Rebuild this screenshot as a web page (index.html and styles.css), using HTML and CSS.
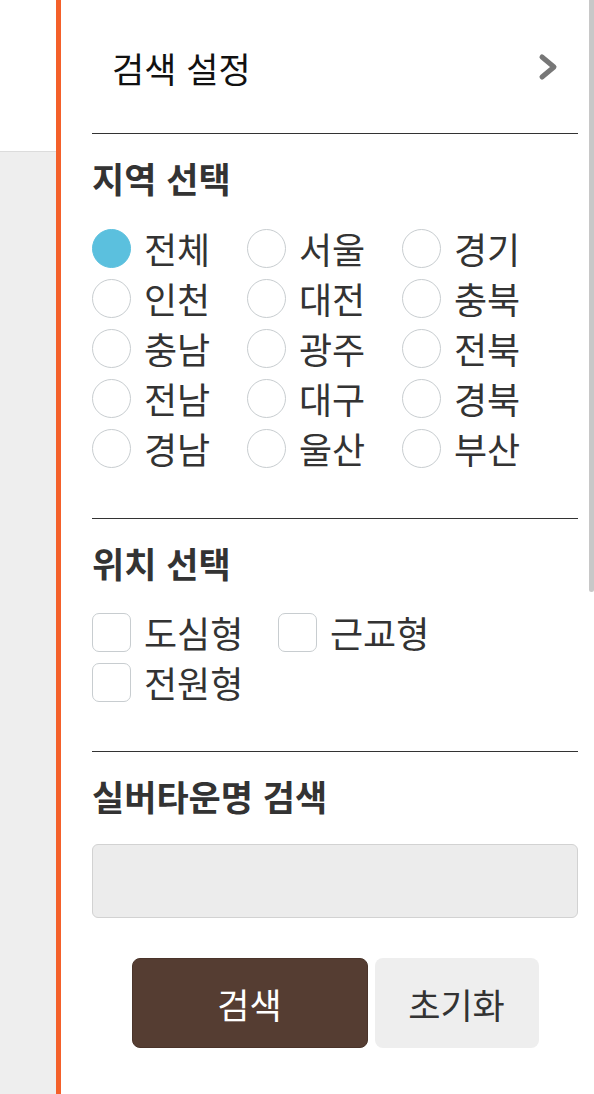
FILE: index.html
```html
<!DOCTYPE html>
<html lang="ko">
<head>
<meta charset="utf-8">
<title>검색 설정</title>
<link rel="stylesheet" href="styles.css">
</head>
<body>
<div class="backdrop">
  <div class="backdrop-top"></div>
  <div class="backdrop-bottom"></div>
</div>
<div class="accent"></div>
<aside class="panel">
  <header class="panel-header">
    <span class="panel-title">검색 설정</span>
    <svg class="chevron" width="20" height="28" viewBox="0 0 20 28"><polyline points="4,4 16,14 4,24" fill="none" stroke="#777" stroke-width="5" stroke-linecap="round" stroke-linejoin="round"/></svg>
  </header>

  <section class="section section-region">
    <h2 class="section-title">지역 선택</h2>
    <div class="radio-grid">
      <label class="opt"><span class="radio checked"></span><span class="opt-label">전체</span></label>
      <label class="opt"><span class="radio"></span><span class="opt-label">서울</span></label>
      <label class="opt"><span class="radio"></span><span class="opt-label">경기</span></label>
      <label class="opt"><span class="radio"></span><span class="opt-label">인천</span></label>
      <label class="opt"><span class="radio"></span><span class="opt-label">대전</span></label>
      <label class="opt"><span class="radio"></span><span class="opt-label">충북</span></label>
      <label class="opt"><span class="radio"></span><span class="opt-label">충남</span></label>
      <label class="opt"><span class="radio"></span><span class="opt-label">광주</span></label>
      <label class="opt"><span class="radio"></span><span class="opt-label">전북</span></label>
      <label class="opt"><span class="radio"></span><span class="opt-label">전남</span></label>
      <label class="opt"><span class="radio"></span><span class="opt-label">대구</span></label>
      <label class="opt"><span class="radio"></span><span class="opt-label">경북</span></label>
      <label class="opt"><span class="radio"></span><span class="opt-label">경남</span></label>
      <label class="opt"><span class="radio"></span><span class="opt-label">울산</span></label>
      <label class="opt"><span class="radio"></span><span class="opt-label">부산</span></label>
    </div>
  </section>

  <section class="section section-location">
    <h2 class="section-title">위치 선택</h2>
    <div class="check-list">
      <label class="opt check-item"><span class="checkbox"></span><span class="opt-label">도심형</span></label>
      <label class="opt check-item"><span class="checkbox"></span><span class="opt-label">근교형</span></label>
      <label class="opt check-item"><span class="checkbox"></span><span class="opt-label">전원형</span></label>
    </div>
  </section>

  <section class="section section-name">
    <h2 class="section-title">실버타운명 검색</h2>
    <div class="name-input"></div>
    <div class="actions">
      <button class="btn btn-search">검색</button>
      <button class="btn btn-reset">초기화</button>
    </div>
  </section>

  <div class="scrollbar"></div>
</aside>
</body>
</html>
```

FILE: styles.css
```css
html, body {
  margin: 0;
  padding: 0;
}
body {
  display: flex;
  width: 594px;
  height: 1094px;
  overflow: hidden;
  font-family: "Noto Sans CJK KR", "Noto Sans", sans-serif;
  color: #333;
  background: #fff;
}
.backdrop {
  width: 56px;
  display: flex;
  flex-direction: column;
}
.backdrop-top {
  height: 151px;
  background: #fff;
  border-bottom: 1px solid #dcdcdc;
}
.backdrop-bottom {
  flex: 1;
  background: #eeeeee;
}
.accent {
  width: 5px;
  background: #f4602a;
}
.panel {
  flex: 1;
  position: relative;
  background: #fff;
  padding: 0 16px 0 31px;
}
.panel-header {
  height: 133px;
  display: flex;
  align-items: center;
  justify-content: space-between;
  padding: 0 20px 0 20px;
  border-bottom: 1px solid #333;
}
.panel-title {
  font-size: 35px;
  color: #111;
  line-height: 40px;
  margin-top: 3px;
}
.chevron {
  display: block;
}
.section {
  padding-top: 24px;
  border-bottom: 1px solid #333;
}
.section:last-of-type {
  border-bottom: none;
}
.section-title {
  margin: 0;
  font-size: 35px;
  line-height: 40px;
  font-weight: 700;
  color: #333;
}
.section-region {
  padding-bottom: 45px;
}
.radio-grid {
  margin-top: 25px;
  display: grid;
  grid-template-columns: 155px 155px 155px;
  grid-auto-rows: 50px;
}
.opt {
  display: flex;
  align-items: center;
  gap: 13px;
}
.opt-label {
  font-size: 36px;
  line-height: 40px;
  color: #333;
}
.radio {
  width: 37px;
  height: 37px;
  border: 1px solid #c8cdd0;
  border-radius: 50%;
  background: #fff;
  flex: none;
}
.radio.checked {
  background: #5bc0de;
  border-color: #5bc0de;
}
.section-location {
  padding-bottom: 44px;
}
.check-list {
  margin-top: 24px;
  display: flex;
  flex-wrap: wrap;
}
.check-item {
  width: 186px;
  height: 50px;
}
.checkbox {
  width: 37px;
  height: 37px;
  border: 1px solid #c8cdd0;
  border-radius: 7px;
  background: #fff;
  flex: none;
}
.name-input {
  margin-top: 28px;
  height: 72px;
  border: 1px solid #d2d2d2;
  border-radius: 6px;
  background: #ececec;
}
.actions {
  margin-top: 40px;
  display: flex;
  justify-content: center;
  gap: 7px;
}
.btn {
  height: 90px;
  border-radius: 8px;
  font-family: inherit;
  font-size: 35px;
  border: none;
  padding: 0;
}
.btn-search {
  width: 236px;
  background: #553d32;
  color: #fff;
  border: 1px solid #4a342a;
}
.btn-reset {
  width: 164px;
  background: #eeeeee;
  color: #333;
}
.scrollbar {
  position: absolute;
  top: 0;
  right: 0;
  width: 5px;
  height: 592px;
  background: #c8c8c8;
  border-radius: 0 0 3px 3px;
}
```
